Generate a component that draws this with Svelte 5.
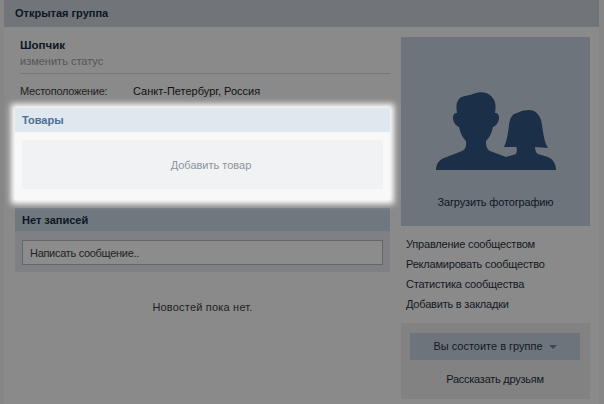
<script>
  const links = ['Управление сообществом', 'Рекламировать сообщество', 'Статистика сообщества', 'Добавить в закладки'];
</script>

<div class="page">
  <header class="top">Открытая группа</header>
  <div class="columns">
    <main class="left">
      <div class="info">
        <div class="name">Шопчик</div>
        <div class="status">изменить статус</div>
        <div class="row"><span class="label">Местоположение:</span><span class="value">Санкт-Петербург, Россия</span></div>
      </div>
      <section class="goods">
        <h2>Товары</h2>
        <div class="goods-body"><div class="add">Добавить товар</div></div>
      </section>
      <section class="wall">
        <h2>Нет записей</h2>
        <div class="post-box"><div class="input">Написать сообщение..</div></div>
      </section>
      <p class="empty">Новостей пока нет.</p>
    </main>
    <aside class="right">
      <div class="photo">
        <svg class="avatar" viewBox="0 0 120 78" width="120" height="78" aria-hidden="true">
          <path d="M0 78C0 72 3 68 8 66L26 59C30 57 30.500 53 30 49C27 46 24 41 23 35C20 34 17 30 17 26C17 22 19 21 21 21C20 15 20 9 24 6C28 3 33 4 37 2C44 -1 52 0 56 5C60 9 60 15 59 21C62 21 63 23 63 26C63 30 60 34 57 35C56 41 53 46 50 49C50 53 50.500 57 54 59L70 65L80 62C81 59 81 57 80.500 55C76 55 72 55 68 55C71 48 72 42 73 33C74 26 76 22 81 21C85 19 88 18 93 18C99 18 103 22 105 28C107 36 107 48 112 56C108 56 103 55 99 55C99 58 100 61 102 62L112 65C117 67 120 72 120 78Z" fill="#1b3048"/>
        </svg>
        <div class="upload">Загрузить фотографию</div>
      </div>
      <nav class="links">
        {#each links as link}<div>{link}</div>{/each}
      </nav>
      <div class="member">
        <div class="btn">Вы состоите в группе<span class="caret"></span></div>
        <div class="tell">Рассказать друзьям</div>
      </div>
    </aside>
  </div>
</div>

<style>
  :global(body) {
    margin: 0;
    background: #8c8c8c;
    font-family: "Liberation Sans", sans-serif;
    font-size: 11px;
    overflow: hidden;
  }
  .page {
    width: 604px;
    height: 404px;
    overflow: hidden;
    box-sizing: border-box;
    padding: 0 5px 0 4px;
    background: #868686;
    color: #1a1c20;
  }
  .top {
    height: 27px;
    line-height: 27px;
    padding-left: 11px;
    background: #717478;
    color: #0c1624;
    font-weight: bold;
  }
  .columns {
    display: flex;
    height: 377px;
    background: #8a8a8a;
    padding-left: 11px;
  }
  .left { width: 375px; }
  .info { padding: 10px 0 0 5px; position: relative; }
  .name { font-weight: bold; color: #0c1624; font-size: 11.5px; line-height: 16px; }
  .status { color: #555; line-height: 16px; border-bottom: 1px solid #777; padding-bottom: 4px; }
  .row { display: flex; line-height: 14px; margin-top: 10px; margin-bottom: -1px; color: #111; }
  .label { width: 113px; color: #222; letter-spacing: -0.25px; }
  .goods {
    margin-top: 11px;
    position: relative;
    background: #f7f8f7;
    box-shadow: 0 0 6px 4px #fff;
    height: 92px;
  }
  h2 { margin: 0; font-size: 11px; font-weight: bold; height: 24px; line-height: 25px; padding-left: 7px; }
  .goods h2 { background: #dfe7ef; color: #4d6f95; }
  .goods-body { padding: 8px 7px; }
  .add { height: 49px; line-height: 51px; text-align: center; background: #f0f2f4; color: #8a949c; padding-left: 17px; box-sizing: border-box; }
  .wall { margin-top: 8px; }
  .wall h2 { background: #6f777f; color: #0c1624; height: 23px; line-height: 25px; }
  .post-box { background: #7e8083; padding: 9px 7px 7px; }
  .input {
    height: 23px; line-height: 25px; padding-left: 7px;
    background: #8c8c8c; border: 1px solid #666; color: #222; letter-spacing: -0.3px;
  }
  .empty { margin: 28px 0 0; text-align: center; color: #1c1e22; line-height: 14px; letter-spacing: 0.2px; }
  .right { width: 189px; margin-left: 11px; padding-top: 10px; }
  .photo {
    height: 189px;
    background: #6e747c;
    display: flex; flex-direction: column; align-items: center;
    box-sizing: border-box;
    padding-top: 55px;
  }
  .avatar { display: block; }
  .upload { margin-top: 25px; color: #10161e; line-height: 14px; letter-spacing: -0.15px; }
  .links { padding: 8px 0 0 5px; color: #14181e; letter-spacing: -0.2px; }
  .links div { height: 20px; line-height: 20px; }
  .member { margin-top: 9px; height: 76px; background: #828282; padding: 10px 10px 0 9px; box-sizing: border-box; }
  .btn { height: 27px; line-height: 27px; background: #6e747c; text-align: center; color: #14181e; }
  .caret {
    display: inline-block; margin-left: 6px; vertical-align: 1px;
    border-left: 4px solid transparent; border-right: 4px solid transparent; border-top: 4px solid #3c4654;
  }
  .tell { text-align: center; margin-top: 12px; line-height: 14px; color: #14181e; letter-spacing: -0.25px; }
</style>
